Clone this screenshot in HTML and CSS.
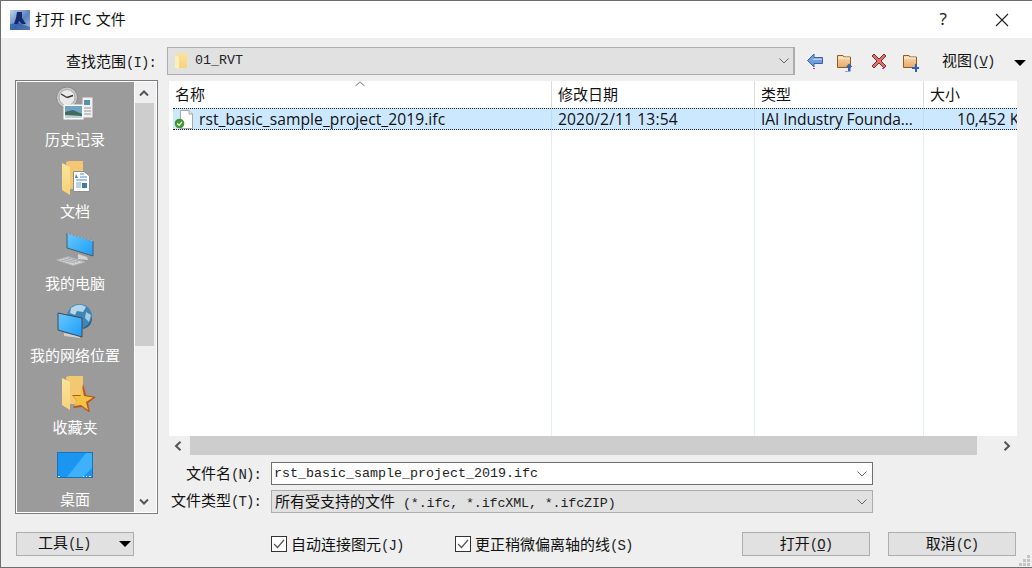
FILE: index.html
```html
<!DOCTYPE html>
<html lang="zh">
<head>
<meta charset="utf-8">
<title>打开 IFC 文件</title>
<link rel="stylesheet" href="styles.css">
</head>
<body>
<div class="window">
  <header class="titlebar">
    <svg class="logo" width="20" height="20" viewBox="0 0 20 20">
      <defs>
        <linearGradient id="lg" x1="0" y1="0" x2="1" y2="1"><stop offset="0" stop-color="#c2d4ea"/><stop offset=".55" stop-color="#5b83bd"/><stop offset="1" stop-color="#a9bfdc"/></linearGradient>
        <linearGradient id="fold" x1="0" y1="0" x2="0" y2="1"><stop offset="0" stop-color="#fbe39a"/><stop offset="1" stop-color="#f6d27a"/></linearGradient>
        <linearGradient id="scr" x1="0" y1="0" x2="1" y2="1"><stop offset="0" stop-color="#6cc8fb"/><stop offset=".5" stop-color="#41b3fc"/><stop offset="1" stop-color="#1f9bf5"/></linearGradient>
        <linearGradient id="tf" x1="0" y1="0" x2="0" y2="1"><stop offset="0" stop-color="#f9dcb4"/><stop offset="1" stop-color="#e8a768"/></linearGradient>
      </defs>
      <rect width="20" height="20" fill="url(#lg)"/>
      <path d="M0 14 L9 13 L20 17 V20 H0Z" fill="#2c5aa5" opacity=".7"/>
      <path d="M7 2 L12 2 L12 8 L16 14 L12 14 L9 11 L8 14 L4 14 L6 8Z" fill="#152a6d"/>
    </svg>
    <span class="title">打开 IFC 文件</span>
    <span class="help">?</span>
    <svg class="close" width="14" height="14" viewBox="0 0 14 14"><path d="M1 1 L13 13 M13 1 L1 13" stroke="#222" stroke-width="1.1" fill="none"/></svg>
  </header>

  <div class="lookrow">
    <label class="looklabel">查找范围<span class="m">(I):</span></label>
    <div class="combo look">
      <svg width="12" height="16" viewBox="0 0 12 16"><path d="M0 2 L4 1 L4 0 H12 V15 H4 L0 16Z" fill="url(#fold)"/><path d="M0 2 L4 4 V16 L0 15Z" fill="#fdeebb"/></svg>
      <span class="m path">01_RVT</span>
      <svg class="chev" width="10" height="6" viewBox="0 0 10 6"><path d="M0.5 0.5 L5 5 L9.5 0.5" stroke="#666" fill="none"/></svg>
    </div>
    <div class="tools">
      <svg class="t-back" width="16" height="16" viewBox="0 0 16 16"><path d="M7 1 L0.5 7.5 L7 14 V10.5 H15.5 V4.5 H7Z" fill="#6f9de0" stroke="#3d5fa8"/><path d="M7 5.5 H15 V7 H5Z" fill="#b4cff5"/><path d="M6 15 h2 v1 h-2z" fill="#e020e0"/></svg>
      <svg class="t-up" width="16" height="18" viewBox="0 0 16 18"><path d="M0.5 13.5 V1.5 H6 L7 3 H13.5 V13.5Z" fill="url(#tf)" stroke="#8f5a20"/><path d="M1 4 H13" stroke="#fff3dd"/><path d="M8 17 H11 V13 H9 L12 9.5 L15.5 13 H13.5 V17.5 H8Z" fill="#3560b5"/></svg>
      <svg class="t-del" width="16" height="16" viewBox="0 0 16 16"><path d="M1 3 L3 1 L8 6 L13 1 L15 3 L10 8 L15 13 L13 15 L8 10 L3 15 L1 13 L6 8Z" fill="#d77070" stroke="#8f2c2c"/><path d="M11 15 h2 v1 h-2z" fill="#e020e0"/></svg>
      <svg class="t-new" width="16" height="18" viewBox="0 0 16 18"><path d="M0.5 13.5 V1.5 H6 L7 3 H13.5 V13.5Z" fill="url(#tf)" stroke="#8f5a20"/><path d="M1 4 H13" stroke="#fff3dd"/><path d="M12 10 h2 v3 h2 v2 h-2 v3 h-2 v-3 h-3 v-2 h3z" fill="#2f5db5"/></svg>
      <span class="views">视图<span class="m">(<u>V</u>)</span></span>
      <span class="tri view-tri"></span>
    </div>
  </div>

  <div class="content">
    <aside class="places">
      <div class="places-list">
        <div class="place">
          <svg width="44" height="40" viewBox="0 0 44 40">
            <circle cx="14" cy="13.5" r="10.5" fill="#c9c9c9" stroke="#8a8a8a"/><circle cx="14" cy="13.5" r="8" fill="#e9e9e9" stroke="#a8a8a8"/><path d="M14 13.5 L8 10 M14 13.5 L20 11.5" stroke="#333" stroke-width="1.4"/>
            <path d="M29 13 H40 V34 H29Z" fill="#f0f0f0" stroke="#9a9a9a"/><path d="M31 16 h6 v5 h-6z" fill="#5a8fa8"/><path d="M31 24 h7 M31 27 h7 M31 30 h7" stroke="#9a9a9a"/>
            <rect x="10.5" y="20.5" width="20" height="15" fill="#fff"/><rect x="12" y="22" width="17" height="12" fill="#6fa3c7"/><path d="M12 28 L20 26 L29 30 V34 H12Z" fill="#3f6b5c"/><path d="M12 31 L29 32 V34 H12Z" fill="#b7d2d8"/>
          </svg>
          <span>历史记录</span>
        </div>
        <div class="place">
          <svg width="44" height="40" viewBox="0 0 44 40">
            <path d="M13 6 L16 5 H30 V33 H16Z" fill="#f3c873"/><path d="M9 7 L17 11 V39 L9 34Z" fill="url(#fold)"/>
            <path d="M20.5 15.5 H31 L36.5 20 V35.5 H20.5Z" fill="#fff" stroke="#8f8f8f"/><path d="M23 18 L25 22 H22Z" fill="#3b7bc4"/><path d="M27 18 h4 M27 21 h7 M23 24 h11" stroke="#4a8ccf"/><path d="M23 27 h5 M23 29 h5 M23 31 h5" stroke="#7aa3cc"/><rect x="29" y="27" width="5" height="5" fill="#3f7ea3"/>
          </svg>
          <span>文档</span>
        </div>
        <div class="place">
          <svg width="44" height="40" viewBox="0 0 44 40">
            <path d="M25 26 L34 29 L35 32 L25 31Z" fill="#d5d5d5"/>
            <path d="M14 5 L40 13 V28 L14 20Z" fill="url(#scr)" stroke="#4b5a68"/><path d="M14 5 L40 13" stroke="#a8b3bc"/>
            <path d="M3.7 32 L15.3 28.7 L32 34 L20 37.5Z" fill="#d2d6d8" stroke="#b0b4b6"/><path d="M8 32 L22 35 M11 31 L25 34 M14 30 L28 33" stroke="#a8acae"/>
          </svg>
          <span>我的电脑</span>
        </div>
        <div class="place">
          <svg width="44" height="40" viewBox="0 0 44 40">
            <circle cx="26.5" cy="16.5" r="12.5" fill="#3f85b5"/><path d="M18 8 Q26 2 33 7 L30 12 L24 11 L22 15 L17 13Z" fill="#b5d6e8"/><path d="M33 12 L38 15 L36 22 L32 18Z" fill="#a8cde0"/><path d="M30 28 Q37 25 39 17 L39 20 Q37 28 30 29Z" fill="#2a5d85"/>
            <path d="M11 33 L27 36 V38 L11 36Z" fill="#d0d0d0"/>
            <path d="M5 13 L29 18 V37 L5 30Z" fill="url(#scr)" stroke="#3c4a58"/>
          </svg>
          <span>我的网络位置</span>
        </div>
        <div class="place">
          <svg width="44" height="40" viewBox="0 0 44 40">
            <path d="M13 5 L16 4 H30 V32 H16Z" fill="#f3c873"/><path d="M9 6 L17 10 V38 L9 33Z" fill="url(#fold)"/>
            <path d="M30 12 L33 23 L43 25 L35 31 L37 41 L29 35 L20 36 L24 29 L19 23 L28 23Z" fill="#b8561c"/>
            <path d="M29 14 L31 24 L40 25.5 L33 30 L35 38 L28 33 L21 34 L24 28.5 L20 24 L27.5 24Z" fill="#f5c244"/>
          </svg>
          <span>收藏夹</span>
        </div>
        <div class="place">
          <svg width="44" height="40" viewBox="0 0 44 40">
            <rect x="4.5" y="8.5" width="35" height="25" fill="#1a96f2" stroke="#1873b8"/><path d="M14 33 L33 9 H39 V24 L30 33Z" fill="#3fb0fb"/><path d="M5 32 h2 v1 h-2z M30 32 h1 v1 h-1z M33 32 h1 v1 h-1z M36 32 h2 v1 h-2z" fill="#fff"/>
          </svg>
          <span>桌面</span>
        </div>
      </div>
      <div class="places-scroll">
        <svg class="arr-v" width="10" height="6" viewBox="0 0 10 6"><path d="M1 5.5 L5 1.5 L9 5.5" stroke="#555" stroke-width="2" fill="none"/></svg>
        <div class="vthumb"></div>
        <svg class="arr-v" width="10" height="6" viewBox="0 0 10 6"><path d="M1 0.5 L5 4.5 L9 0.5" stroke="#555" stroke-width="2" fill="none"/></svg>
      </div>
    </aside>

    <section class="main">
      <div class="list">
        <div class="list-head">
          <div class="hcell first">名称<svg class="sort" width="10" height="6" viewBox="0 0 10 6"><path d="M0.5 5 L5 0.8 L9.5 5" stroke="#777" fill="none"/></svg></div>
          <div class="hcell">修改日期</div>
          <div class="hcell">类型</div>
          <div class="hcell last">大小</div>
        </div>
        <div class="list-body">
          <div class="row">
            <div class="cell first">
              <svg width="19" height="20" viewBox="0 0 19 20"><path d="M6.5 1.5 H15 L18.5 5 V19.5 H6.5Z" fill="#fff" stroke="#a8a8a8"/><path d="M15 1.5 V5 H18.5" fill="#e8e8e8" stroke="#a8a8a8"/><circle cx="5.5" cy="14.5" r="4.8" fill="#3e9a2e"/><path d="M3.2 14.5 L5 16.3 L8 13" stroke="#fff" stroke-width="1.3" fill="none"/></svg>
              <span class="fname">rst_basic_sample_project_2019.ifc</span>
            </div>
            <div class="cell date">2020/2/11 13:54</div>
            <div class="cell ftype">IAI Industry Founda...</div>
            <div class="cell last size">10,452 K</div>
          </div>
        </div>
      </div>
      <div class="hscroll">
        <svg class="arr-h" width="8" height="10" viewBox="0 0 8 10"><path d="M6.5 0.8 L2 5 L6.5 9.2" stroke="#555" stroke-width="2" fill="none"/></svg>
        <div class="hthumb"></div>
        <svg class="arr-h" width="8" height="10" viewBox="0 0 8 10"><path d="M1.5 0.8 L6 5 L1.5 9.2" stroke="#555" stroke-width="2" fill="none"/></svg>
      </div>
      <div class="formrow">
        <label class="flabel">文件名<span class="m">(N):</span></label>
        <div class="combo field">
          <span class="m val">rst_basic_sample_project_2019.ifc</span>
          <svg class="chev" width="10" height="6" viewBox="0 0 10 6"><path d="M0.5 0.5 L5 5 L9.5 0.5" stroke="#666" fill="none"/></svg>
        </div>
      </div>
      <div class="formrow second">
        <label class="flabel">文件类型<span class="m">(T):</span></label>
        <div class="combo typefield">
          <span class="val">所有受支持的文件<span class="m"> (*.ifc, *.ifcXML, *.ifcZIP)</span></span>
          <svg class="chev" width="10" height="6" viewBox="0 0 10 6"><path d="M0.5 0.5 L5 5 L9.5 0.5" stroke="#666" fill="none"/></svg>
        </div>
      </div>
    </section>
  </div>

  <footer class="bottom">
    <button class="btn toolsbtn"><span class="lbl">工具<span class="m">(<u>L</u>)</span></span><span class="tri"></span></button>
    <label class="check first-check"><span class="box"><svg width="12" height="10" viewBox="0 0 12 10"><path d="M1 5 L4.5 8.5 L11 1" stroke="#555" stroke-width="1.2" fill="none"/></svg></span><span class="ctext">自动连接图元<span class="m">(J)</span></span></label>
    <label class="check second-check"><span class="box"><svg width="12" height="10" viewBox="0 0 12 10"><path d="M1 5 L4.5 8.5 L11 1" stroke="#555" stroke-width="1.2" fill="none"/></svg></span><span class="ctext">更正稍微偏离轴的线<span class="m">(S)</span></span></label>
    <button class="btn act open"><span class="lbl">打开<span class="m">(<u>O</u>)</span></span></button>
    <button class="btn act"><span class="lbl">取消<span class="m">(C)</span></span></button>
  </footer>
  <svg class="grip" width="12" height="12" viewBox="0 0 12 12"><path d="M8 0h3v3H8z M4 4h3v3H4z M8 4h3v3H8z M0 8h3v3H0z M4 8h3v3H4z M8 8h3v3H8z" fill="#c4c4c4"/></svg>
</div>
</body>
</html>
```
FILE: styles.css
```css
* { box-sizing: border-box; }
html, body { margin: 0; padding: 0; }
body {
  background: #efefef;
  font-family: "Noto Sans CJK SC", "Liberation Sans", sans-serif;
  font-size: 15px;
  color: #111;
  overflow: hidden;
}
.m { font-family: "Liberation Mono", monospace; font-size: 14px; letter-spacing: -0.9px; font-weight: 400; color: #222; }
.window {
  position: relative;
  width: 1032px;
  height: 568px;
  border: 1px solid #6e6e6e;
  border-right: 0;
  background: #efefef;
  overflow: hidden;
}

/* title bar */
.titlebar {
  display: flex;
  align-items: center;
  height: 37px;
  background: #fff;
  padding-left: 9px;
}
.logo { margin-right: 5px; }
.title { font-size: 15px; line-height: 20px; color: #111; padding-bottom: 2px; word-spacing: 1px; }
.help {
  margin-left: auto;
  font-family: "Noto Sans", sans-serif;
  font-size: 17px;
  line-height: 20px;
  color: #222;
  padding-bottom: 2px;
}
.close { margin-left: 48px; margin-right: 23px; }

/* look in */
.lookrow { display: flex; align-items: center; height: 28px; margin-top: 9px; }
.looklabel { width: 155px; text-align: right; line-height: 28px; padding-top: 2px; white-space: nowrap; }
.combo {
  display: flex;
  align-items: center;
  border: 1px solid #adadad;
  background: #e1e1e1;
}
.look { width: 628px; height: 28px; margin-left: 11px; padding-left: 7px; border-width: 1px 2px 1px 1px; }
.look .path { font-size: 13.33px; letter-spacing: 0; margin-left: 8px; position: relative; top: -1px; }
.chev { margin-left: auto; margin-right: 5px; }
.look .chev { margin-right: 4px; }
.tools { display: flex; align-items: center; height: 28px; }
.tools svg { flex: none; }
.t-back { margin-left: 12px; margin-top: -1px; }
.t-up { margin-left: 14px; margin-top: 3px; }
.t-del { margin-left: 18px; }
.t-new { margin-left: 16px; margin-top: 3px; }
.views { margin-left: 23px; white-space: nowrap; padding-bottom: 3px; }
.tri {
  display: inline-block;
  width: 0; height: 0;
  border-left: 6px solid transparent;
  border-right: 6px solid transparent;
  border-top: 6px solid #000;
}
.view-tri { margin-left: 19px; margin-top: 3px; }

/* content */
.content { display: flex; align-items: flex-start; margin-top: 5px; }
.places {
  display: flex;
  width: 143px;
  height: 434px;
  margin-left: 14px;
  border: 1px solid #7c7c84;
  background: #fff;
  padding: 1px 0 1px 1px;
}
.places-list {
  flex: none;
  width: 117px;
  height: 430px;
  background: #9b9b9b;
  overflow: hidden;
  color: #fff;
}
.place {
  display: flex;
  flex-direction: column;
  align-items: center;
  height: 72px;
  padding: 2px 1px 0 0;
}
.place svg { display: block; flex: none; height: 40px; }
.place span { line-height: 22px; margin-top: 4px; white-space: nowrap; }
.places-scroll {
  flex: none;
  width: 21px;
  margin-left: 1px;
  background: #efefef;
  display: flex;
  flex-direction: column;
  align-items: flex-start;
  height: 430px;
}
.arr-v { margin: 8px 0 0 4px; flex: none; }
.vthumb { width: 19px; height: 243px; background: #cdcdcd; margin-top: 7px; }
.vthumb + .arr-v { margin-top: 153px; }

/* file list */
.main { width: 848px; margin-left: 11px; margin-top: 1px; }
.list { height: 355px; background: #fff; display: flex; flex-direction: column; overflow: hidden; }
.list-head { display: grid; grid-template-columns: 383px 203px 169px 93px; height: 26px; flex: none; }
.hcell {
  position: relative;
  border-right: 1px solid #dcdcdc;
  padding-left: 6px;
  line-height: 26px;
  white-space: nowrap;
}
.hcell.last { border-right: 0; }
.sort { position: absolute; left: 186px; top: 0; }
.list-body {
  flex: 1;
  padding-top: 1px;
  background-image:
    linear-gradient(#e4eff9, #e4eff9),
    linear-gradient(#e4eff9, #e4eff9),
    linear-gradient(#e4eff9, #e4eff9);
  background-size: 1px 100%;
  background-repeat: no-repeat;
  background-position: 382px 0, 585px 0, 754px 0;
}
.row {
  display: grid;
  grid-template-columns: 379px 203px 169px 93px;
  margin-left: 4px;
  height: 22px;
  background: #cce8ff;
  border-top: 1px dotted #222;
  border-bottom: 1px dotted #222;
  font-family: "Open Sans", "Liberation Sans", sans-serif;
  font-size: 15.6px;
  line-height: 21px;
  color: #111;
}
.cell { border-right: 1px solid #bcdcf4; padding-left: 6px; white-space: nowrap; overflow: hidden; }
.cell.first { display: flex; align-items: center; padding-left: 0; gap: 6px; }
.cell.first svg { flex: none; margin-left: 1px; }
.cell.last { border-right: 0; }
.fname { letter-spacing: 0.07px; }
.date { letter-spacing: 0.14px; }
.ftype { letter-spacing: -0.1px; }
.size { padding-left: 33px; }

/* horizontal scrollbar */
.hscroll { display: flex; align-items: center; height: 19px; background: #efefef; }
.arr-h { flex: none; }
.hscroll .arr-h:first-child { margin-left: 5px; }
.hthumb { width: 787px; height: 19px; background: #cdcdcd; margin-left: 8px; }
.hthumb + .arr-h { margin-left: 26px; }

/* form rows */
.formrow { display: flex; align-items: center; height: 23px; margin-top: 7px; }
.formrow.second { margin-top: 5px; }
.flabel { width: 94px; text-align: right; white-space: nowrap; margin-left: -2px; flex: none; padding-bottom: 2px; }
.second .flabel { padding-bottom: 4px; }
.field, .typefield { width: 602px; height: 23px; margin-left: 10px; }
.field { background: #fff; border-color: #6e6e6e; }
.val { padding-left: 2px; white-space: nowrap; }
.field .m, .typefield .m { font-size: 13.33px; letter-spacing: 0; }
.typefield .m { letter-spacing: -0.12px; }
.typefield .val { padding-left: 3px; padding-bottom: 2px; }

/* bottom */
.bottom { display: flex; align-items: center; height: 24px; margin-top: 18px; padding-left: 15px; }
.btn {
  height: 24px;
  border: 1px solid #adadad;
  background: #e1e1e1;
  font: inherit;
  color: #111;
  padding: 0;
  line-height: 20px;
  white-space: nowrap;
}
.lbl { display: inline-block; padding-bottom: 2px; }
.toolsbtn { display: flex; align-items: center; width: 118px; flex: none; padding-left: 21px; }
.toolsbtn .tri { margin-left: auto; margin-right: 2px; }
.check { display: flex; align-items: center; white-space: nowrap; font-size: 15px; }
.ctext { padding-bottom: 2px; }
.box {
  display: flex;
  align-items: center;
  justify-content: center;
  width: 16px;
  height: 16px;
  margin-right: 4px;
  border: 1px solid #333;
  background: #fff;
}
.first-check { margin-left: 137px; width: 184px; }
.second-check { width: 287px; }
.act { width: 128px; flex: none; }
.open { margin-right: 18px; }
.grip { position: absolute; right: 1px; bottom: 0; }
```
